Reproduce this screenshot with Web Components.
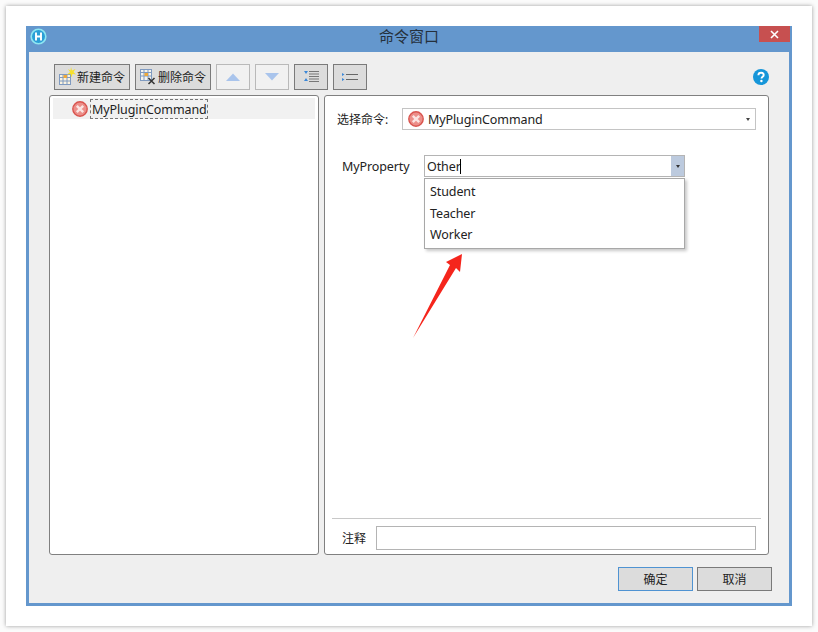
<!DOCTYPE html>
<html lang="zh">
<head>
<meta charset="utf-8">
<title>命令窗口</title>
<style>
  html, body { margin: 0; padding: 0; background: #fbfbfb; }
  body {
    width: 818px;
    height: 632px;
    overflow: hidden;
    font: 12.5px "Noto Sans", "Noto Sans CJK SC", sans-serif;
    letter-spacing: -0.1px;
    color: #222;
  }
</style>
</head>
<body>
<cmd-page>
  <cmd-window heading="命令窗口">
    <cmd-toolbar>
      <tool-button label="新建命令" icon="new" wide></tool-button>
      <tool-button label="删除命令" icon="del" wide></tool-button>
      <tool-button icon="up" disabled></tool-button>
      <tool-button icon="down" disabled></tool-button>
      <tool-button icon="indent"></tool-button>
      <tool-button icon="list"></tool-button>
    </cmd-toolbar>
    <cmd-list slot="left" item="MyPluginCommand"></cmd-list>
    <cmd-editor slot="right"></cmd-editor>
    <dialog-button slot="foot" primary>确定</dialog-button>
    <dialog-button slot="foot">取消</dialog-button>
  </cmd-window>
</cmd-page>

<script>
class CmdPage extends HTMLElement {
  connectedCallback() {
    this.attachShadow({ mode: "open" });
    this.shadowRoot.innerHTML = `
      <style>
        :host {
          display: block;
          box-sizing: border-box;
          width: 806px;
          height: 620px;
          margin: 6px;
          padding: 20px;
          background: #fff;
          box-shadow: 0 0 4px rgba(0, 0, 0, .38);
        }
      </style>
      <slot></slot>
    `;
  }
}

class CmdWindow extends HTMLElement {
  connectedCallback() {
    this.attachShadow({ mode: "open" });
    this.shadowRoot.innerHTML = `
      <style>
        :host {
          display: flex;
          flex-direction: column;
          box-sizing: border-box;
          width: 766px;
          height: 580px;
          border: 3px solid #6497cd;
          border-top: 0;
          background: #efefef;
        }
        .title {
          display: grid;
          grid-template-columns: 1fr auto 1fr;
          align-items: start;
          height: 26px;
          margin: 0 -3px;
          background: #6497cd;
        }
        .logo { display: block; margin: 2px 0 0 4px; }
        .name {
          font-size: 15px;
          letter-spacing: 0;
          line-height: 21px;
          color: #25303c;
        }
        .close {
          justify-self: end;
          display: flex;
          align-items: center;
          justify-content: center;
          width: 31px;
          height: 16px;
          margin-right: 2px;
          background: #c75050;
        }
        .body {
          display: flex;
          flex-direction: column;
          flex: 1;
          padding: 12px 20px 0 20px;
        }
        .top { display: flex; align-items: center; height: 26px; padding-left: 5px; }
        .help { display: block; margin-left: auto; }
        .panels { display: flex; gap: 5px; margin-top: 5px; height: 460px; }
        .foot {
          display: flex;
          justify-content: flex-end;
          gap: 4px;
          margin: 12px -3px 0 0;
        }
      </style>
      <div class="title">
        <svg class="logo" width="17" height="17" viewBox="0 0 17 17">
          <circle cx="8.5" cy="8.5" r="7.3" fill="#2b9fd6" stroke="#8fe6f2" stroke-width="1.6"/>
          <path d="M6 4.600v7.800M11 4.600v7.800M6 8.500h5" stroke="#fff" stroke-width="1.900" fill="none"/>
        </svg>
        <div class="name">${this.getAttribute("heading")}</div>
        <div class="close">
          <svg width="9" height="9" viewBox="0 0 9 9"><path d="M1 1l7 7M8 1l-7 7" stroke="#fff" stroke-width="1.6"/></svg>
        </div>
      </div>
      <div class="body">
        <div class="top">
          <slot></slot>
          <svg class="help" width="16" height="16" viewBox="0 0 16 16">
            <circle cx="8" cy="8" r="8" fill="#1696d9"/>
            <path d="M5.400 6.200c0-1.600 1.200-2.400 2.700-2.400s2.600.9 2.600 2.100c0 1.900-2.200 1.900-2.200 3.600" stroke="#fff" stroke-width="1.900" fill="none"/>
            <circle cx="8.400" cy="12" r="1.200" fill="#fff"/>
          </svg>
        </div>
        <div class="panels">
          <slot name="left"></slot>
          <slot name="right"></slot>
        </div>
        <div class="foot"><slot name="foot"></slot></div>
      </div>
    `;
  }
}

class CmdToolbar extends HTMLElement {
  connectedCallback() {
    this.attachShadow({ mode: "open" });
    this.shadowRoot.innerHTML = `
      <style>:host { display: flex; gap: 5px; }</style>
      <slot></slot>
    `;
  }
}

const TOOL_ICONS = {
  new: `<svg width="22" height="22" viewBox="0 0 22 22">
      <rect x="4.500" y="8.500" width="11" height="10" fill="#fbf3df" stroke="#7f9ac0"/>
      <path d="M4.500 11.500h11M4.500 15h11M8 8.500v10M12 8.500v10" stroke="#7f9ac0"/>
      <rect x="8.500" y="9" width="3.500" height="3" fill="#eda83a"/>
      <path d="M16 1l1 3.500L20.500 3l-2 3 2.500 2.500-3.500-.5-1 3.500-1-3.500-3.500.5L15 6l-2-3 2.500 1.500z" fill="#f6e02c"/>
    </svg>`,
  del: `<svg width="22" height="22" viewBox="0 0 22 22">
      <rect x="4.500" y="3.500" width="11" height="11" fill="#f6f4ee" stroke="#7f9ac0"/>
      <path d="M4.500 6.500h11M4.500 10h11M8 3.500v11M12 3.500v11" stroke="#7f9ac0"/>
      <rect x="8.500" y="7" width="3.500" height="3" fill="#eda83a"/>
      <path d="M12.500 12l6 6M18.500 12l-6 6" stroke="#333" stroke-width="1.500"/>
    </svg>`,
  up: `<svg width="14" height="8" viewBox="0 0 14 8"><path d="M7 .5L14 8H0z" fill="#a9c4ec"/></svg>`,
  down: `<svg width="14" height="8" viewBox="0 0 14 8"><path d="M0 0h14L7 7.500z" fill="#a9c4ec"/></svg>`,
  indent: `<svg width="18" height="16" viewBox="0 0 18 16">
      <path d="M2 2h4L4 5zM2 12h4L4 9z" fill="#3a87d8"/>
      <path d="M7 2.500h10M7 5h10M7 7.500h10M7 10h10M7 12.500h10" stroke="#777"/>
    </svg>`,
  list: `<svg width="18" height="14" viewBox="0 0 18 14">
      <path d="M1 3l2.500 1.500L1 6zM1 8l2.500 1.500L1 11z" fill="#3a87d8"/>
      <path d="M5 4.500h12M5 9.500h12" stroke="#666"/>
    </svg>`
};

class ToolButton extends HTMLElement {
  connectedCallback() {
    this.attachShadow({ mode: "open" });
    let label = this.getAttribute("label") || "";
    this.shadowRoot.innerHTML = `
      <style>
        :host {
          display: flex;
          align-items: center;
          justify-content: center;
          box-sizing: border-box;
          width: 34px;
          height: 26px;
          border: 1px solid #7a7a7a;
          background: #dcdcdc;
        }
        :host([wide]) { width: 76px; justify-content: flex-start; }
        :host([disabled]) { border-color: #b9b9b9; background: #f1f1f1; }
        svg { display: block; flex: none; }
        span { font-size: 12px; letter-spacing: 0; line-height: 24px; padding-top: 2px; white-space: nowrap; color: #222; }
      </style>
      ${TOOL_ICONS[this.getAttribute("icon")]}
      ${label ? `<span>${label}</span>` : ""}
    `;
  }
}

class CmdIcon extends HTMLElement {
  connectedCallback() {
    this.attachShadow({ mode: "open" });
    this.shadowRoot.innerHTML = `
      <style>
        :host { display: block; width: 16px; height: 16px; flex: none; }
        svg { display: block; }
      </style>
      <svg width="16" height="16" viewBox="0 0 16 16">
        <circle cx="8" cy="8" r="7.200" fill="#ec8f8a" stroke="#d9544e" stroke-width="1.400"/>
        <path d="M4.800 4.800l6.400 6.400M11.200 4.800l-6.400 6.400" stroke="#fbe4e2" stroke-width="2.400"/>
      </svg>
    `;
  }
}

class CmdList extends HTMLElement {
  connectedCallback() {
    this.attachShadow({ mode: "open" });
    this.shadowRoot.innerHTML = `
      <style>
        :host {
          display: block;
          box-sizing: border-box;
          width: 270px;
          height: 460px;
          padding: 2px 3px;
          border: 1px solid #808080;
          border-radius: 3px;
          background: #fff;
        }
        .row {
          display: flex;
          align-items: center;
          height: 21px;
          padding-left: 19px;
          background: #f1f1f1;
        }
        .text {
          box-sizing: border-box;
          width: 118px;
          height: 20px;
          margin-left: 2px;
          padding: 0 1px;
          border: 1px dashed #777;
          line-height: 20px;
          white-space: nowrap;
        }
      </style>
      <div class="row">
        <cmd-icon></cmd-icon>
        <div class="text">${this.getAttribute("item")}</div>
      </div>
    `;
  }
}

class CmdEditor extends HTMLElement {
  connectedCallback() {
    this.attachShadow({ mode: "open" });
    this.shadowRoot.innerHTML = `
      <style>
        :host {
          display: flex;
          flex-direction: column;
          position: relative;
          box-sizing: border-box;
          width: 445px;
          height: 460px;
          padding: 12px 7px 4px 7px;
          border: 1px solid #808080;
          border-radius: 3px;
          background: #fff;
        }
        .choose { display: flex; align-items: center; padding-left: 5px; height: 22px; }
        .choose .lbl { width: 65px; font-size: 12px; letter-spacing: 0; }
        .select {
          display: flex;
          align-items: center;
          box-sizing: border-box;
          width: 354px;
          height: 22px;
          padding: 0 5px;
          border: 1px solid #c4c4c4;
          gap: 4px;
        }
        .select span { flex: 1; }
        .tri { width: 0; height: 0; border: 2.500px solid transparent; border-top: 3px solid #444; border-bottom: 0; }
        .prop { display: flex; align-items: center; margin-top: 25px; padding-left: 10px; height: 22px; }
        .prop .lbl { width: 82px; }
        .note { display: flex; align-items: center; height: 24px; padding-left: 10px; }
        .note .lbl { width: 34px; font-size: 12px; letter-spacing: 0; }
        .note .box { box-sizing: border-box; width: 380px; height: 24px; border: 1px solid #b4b4b4; }
        .sep { margin-top: auto; margin-bottom: 7px; border-top: 1px solid #c8c8c8; }
        .arrow { position: absolute; left: 83px; top: 154px; display: block; }
      </style>
      <div class="choose">
        <span class="lbl">选择命令:</span>
        <div class="select"><cmd-icon></cmd-icon><span>MyPluginCommand</span><div class="tri"></div></div>
      </div>
      <div class="prop">
        <span class="lbl">MyProperty</span>
        <enum-combo value="Other"><combo-item>Student</combo-item><combo-item>Teacher</combo-item><combo-item>Worker</combo-item></enum-combo>
      </div>
      <div class="sep"></div>
      <div class="note"><span class="lbl">注释</span><div class="box"></div></div>
      <svg class="arrow" width="60" height="90" viewBox="408 250 60 90">
        <path d="M413 338L450 265L446 262L462 254L460 272L456 268Z" fill="#f5251c"/>
      </svg>
    `;
  }
}

class EnumCombo extends HTMLElement {
  connectedCallback() {
    this.attachShadow({ mode: "open" });
    this.shadowRoot.innerHTML = `
      <style>
        :host { display: block; position: relative; width: 261px; height: 22px; }
        .field {
          display: flex;
          box-sizing: border-box;
          height: 22px;
          border: 1px solid #b4b4b4;
          background: #fff;
        }
        .val { flex: 1; padding-left: 2px; line-height: 21px; }
        .caret { display: inline-block; width: 1px; height: 15px; vertical-align: -3px; margin-left: -1px; background: #000; }
        .btn {
          display: flex;
          align-items: center;
          justify-content: center;
          width: 13px;
          background: #bccade;
        }
        .tri { width: 0; height: 0; border: 2.500px solid transparent; border-top: 3px solid #333; border-bottom: 0; }
        .menu {
          position: absolute;
          left: 0;
          top: 23px;
          box-sizing: border-box;
          width: 261px;
          height: 71px;
          padding: 2px 5px;
          border: 1px solid #a8a8a8;
          background: #fff;
          box-shadow: 2px 2px 3px rgba(0, 0, 0, .22);
        }
      </style>
      <div class="field">
        <div class="val">${this.getAttribute("value")}<span class="caret"></span></div>
        <div class="btn"><div class="tri"></div></div>
      </div>
      <div class="menu"><slot></slot></div>
    `;
  }
}

class ComboItem extends HTMLElement {
  connectedCallback() {
    this.attachShadow({ mode: "open" });
    this.shadowRoot.innerHTML = `
      <style>:host { display: block; height: 21.500px; line-height: 21px; }</style>
      <slot></slot>
    `;
  }
}

class DialogButton extends HTMLElement {
  connectedCallback() {
    this.attachShadow({ mode: "open" });
    this.shadowRoot.innerHTML = `
      <style>
        :host {
          display: flex;
          align-items: center;
          justify-content: center;
          box-sizing: border-box;
          width: 75px;
          height: 24px;
          border: 1px solid #7a7a7a;
          background: #dcdcdc;
          font-size: 12px;
          letter-spacing: 0;
        }
        :host([primary]) { border-color: #4f93d2; }
      </style>
      <slot></slot>
    `;
  }
}

customElements.define("cmd-page", CmdPage);
customElements.define("cmd-window", CmdWindow);
customElements.define("cmd-toolbar", CmdToolbar);
customElements.define("tool-button", ToolButton);
customElements.define("cmd-icon", CmdIcon);
customElements.define("cmd-list", CmdList);
customElements.define("enum-combo", EnumCombo);
customElements.define("combo-item", ComboItem);
customElements.define("cmd-editor", CmdEditor);
customElements.define("dialog-button", DialogButton);
</script>
</body>
</html>
